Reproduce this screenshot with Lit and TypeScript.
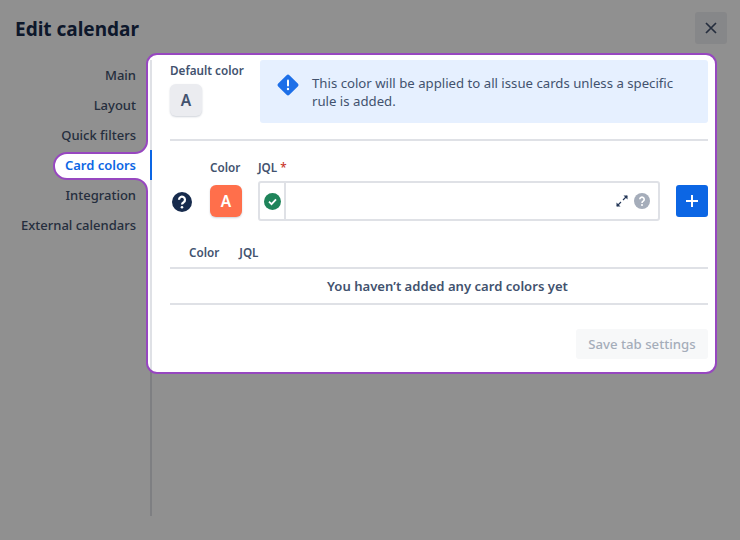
import { LitElement, html, css, svg } from "lit";
import { customElement } from "lit/decorators.js";

const NAV = ["Main", "Layout", "Quick filters", "Card colors", "Integration", "External calendars"];

@customElement("app-root")
export class AppRoot extends LitElement {
  static styles = css`
    :host {
      display: block;
      position: relative;
      width: 740px;
      height: 540px;
      overflow: hidden;
      background: #fff;
      color: #42526e;
      font-family: "Noto Sans", "Open Sans", sans-serif;
      font-size: 13px;
    }
    .head {
      height: 60px;
      display: flex;
      align-items: flex-start;
      justify-content: space-between;
      padding: 12px 13px 0 15px;
      box-sizing: border-box;
    }
    h1 {
      margin: 0;
      font-size: 19px;
      line-height: 34px;
      font-weight: 700;
      color: #172b4d;
    }
    .close {
      width: 32px;
      height: 32px;
      border-radius: 3px;
      background: #eeeff2;
      display: flex;
      align-items: center;
      justify-content: center;
    }
    .body {
      display: flex;
      height: 456px;
    }
    nav {
      width: 150px;
      flex: none;
      border-right: 2px solid #dfe1e6;
    }
    .item {
      height: 30px;
      line-height: 30px;
      padding-right: 14px;
      margin-right: -2px;
      border-right: 2px solid transparent;
      text-align: right;
      font-weight: 500;
      white-space: nowrap;
    }
    .item.on {
      color: #0c66e4;
      font-weight: 600;
      border-right-color: #0c66e4;
    }
    main {
      flex: 1;
      padding: 0 32px 0 18px;
    }
    .top {
      display: flex;
      height: 79px;
      border-bottom: 2px solid #dfe1e6;
    }
    .def {
      width: 90px;
      flex: none;
    }
    .lab {
      font-size: 11.7px;
      font-weight: 600;
      line-height: 16px;
      color: #42526e;
      white-space: nowrap;
    }
    .def .lab {
      margin: 3px 0 5px;
      position: relative;
      top: -1px;
    }
    .swatch {
      width: 32px;
      height: 32px;
      border-radius: 6px;
      display: flex;
      align-items: center;
      justify-content: center;
      font-weight: 600;
      font-size: 15.5px;
      background: #ebecf0;
      color: #42526e;
      box-shadow: 0 1px 2px rgba(9, 30, 66, 0.2);
    }
    .swatch.orange {
      background: #ff6f4b;
      color: #fff;
    }
    .info {
      flex: 1;
      height: 63px;
      box-sizing: border-box;
      background: #e6f0ff;
      border-radius: 3px;
      padding: 14px 30px 0 17px;
      display: flex;
      gap: 13px;
      font-size: 13.2px;
      line-height: 18px;
      color: #42526e;
    }
    .info svg {
      flex: none;
    }
    .form {
      display: grid;
      grid-template-columns: 40px 48px 402px 1fr;
      grid-template-rows: 40px 40px;
      align-items: center;
    }
    .form .lab {
      align-self: end;
      padding-bottom: 6px;
    }
    .req {
      color: #c9372c;
      font-weight: 500;
    }
    .q {
      justify-self: start;
      margin-left: 2px;
      margin-top: 2px;
      display: block;
    }
    .plus {
      justify-self: end;
      width: 32px;
      height: 32px;
      border-radius: 3px;
      background: #0c66e4;
      display: flex;
      align-items: center;
      justify-content: center;
    }
    .input {
      height: 40px;
      box-sizing: border-box;
      border: 2px solid #dfe1e6;
      border-radius: 3px;
      display: flex;
      align-items: center;
      background: #fff;
    }
    .check {
      width: 24px;
      height: 100%;
      flex: none;
      border-right: 2px solid #dfe1e6;
      display: flex;
      align-items: center;
      justify-content: center;
    }
    .fill {
      flex: 1;
    }
    .tools {
      display: flex;
      align-items: center;
      gap: 5px;
      padding-right: 8px;
    }
    .thead {
      margin-top: 16px;
      height: 30px;
      display: flex;
      align-items: center;
      gap: 20px;
      padding: 0 0 0 19px;
      border-bottom: 2px solid #dfe1e6;
      font-size: 11.7px;
      font-weight: 600;
    }
    .empty {
      height: 34px;
      line-height: 34px;
      padding-left: 17px;
      text-align: center;
      font-size: 13.1px;
      font-weight: 600;
      border-bottom: 2px solid #dfe1e6;
    }
    .actions {
      margin-top: 24px;
      display: flex;
      justify-content: flex-end;
    }
    .save {
      width: 132px;
      height: 30px;
      line-height: 30px;
      text-align: center;
      font-size: 13.2px;
      font-weight: 500;
      border-radius: 3px;
      background: #f7f8f9;
      color: #a5adba;
    }
    .spot {
      position: absolute;
      inset: 0;
      pointer-events: none;
    }
  `;

  render() {
    const hole =
      "M157 54H706a10 10 0 0 1 10 10V363a10 10 0 0 1-10 10H157a10 10 0 0 1-10-10V191a12 12 0 0 0-12-12H67a13 13 0 0 1 0-26H135a12 12 0 0 0 12-12V64a10 10 0 0 1 10-10Z";
    return html`
      <div class="head">
        <h1>Edit calendar</h1>
        <div class="close">
          <svg width="16" height="16" viewBox="0 0 16 16">
            <path d="M3 3l10 10M13 3L3 13" stroke="#42526e" stroke-width="1.700" fill="none" />
          </svg>
        </div>
      </div>
      <div class="body">
        <nav>${NAV.map((n) => html`<div class="item ${n === "Card colors" ? "on" : ""}">${n}</div>`)}</nav>
        <main>
          <div class="top">
            <div class="def">
              <div class="lab">Default color</div>
              <div class="swatch">A</div>
            </div>
            <div class="info">
              <svg width="22" height="22" viewBox="0 0 22 22">
                <path
                  d="M11 .6a2 2 0 0 1 1.4.6l8.400 8.400a2 2 0 0 1 0 2.800l-8.400 8.400a2 2 0 0 1-2.800 0l-8.400-8.400a2 2 0 0 1 0-2.800l8.400-8.400A2 2 0 0 1 11 .6Z"
                  fill="#1d6fe8"
                />
                <rect x="10" y="5.500" width="2" height="7" rx="1" fill="#fff" />
                <circle cx="11" cy="15" r="1.200" fill="#fff" />
              </svg>
              <div>This color will be applied to all issue cards unless a specific rule is added.</div>
            </div>
          </div>
          <div class="form">
            <div></div>
            <div class="lab">Color</div>
            <div class="lab">JQL <span class="req">*</span></div>
            <div></div>
            <svg class="q" width="20" height="20" viewBox="0 0 20 20">
              <circle cx="10" cy="10" r="10" fill="#172b4d" />
              <path d="M7 7.700a3 3 0 1 1 4.700 2.500c-1.100.7-1.700 1.200-1.700 2.300" stroke="#fff" stroke-width="2.200" fill="none" />
              <circle cx="10" cy="15.300" r="1.300" fill="#fff" />
            </svg>
            <div class="swatch orange">A</div>
            <div class="input">
              <div class="check">
                <svg width="17" height="17" viewBox="0 0 17 17">
                  <circle cx="8.500" cy="8.500" r="8.500" fill="#1f845a" />
                  <path d="M5 8.700l2.500 2.400L12 6.300" stroke="#fff" stroke-width="1.800" fill="none" />
                </svg>
              </div>
              <div class="fill"></div>
              <div class="tools">
                <svg width="14" height="14" viewBox="0 0 14 14">
                  <path d="M8 6l4-4M2 12l4-4" stroke="#253858" stroke-width="1.100" fill="none" />
                  <path d="M8.500 1.500H12.500V5.500ZM1.500 8.500V12.500H5.500Z" fill="#253858" />
                </svg>
                <svg width="16" height="16" viewBox="0 0 16 16">
                  <circle cx="8" cy="8" r="8" fill="#a5adba" />
                  <path d="M5.800 6.300a2.200 2.200 0 1 1 3.400 1.900c-.8.500-1.200.8-1.200 1.700" stroke="#fff" stroke-width="1.600" fill="none" />
                  <circle cx="8" cy="12" r="1" fill="#fff" />
                </svg>
              </div>
            </div>
            <div class="plus">
              <svg width="14" height="14" viewBox="0 0 14 14">
                <path d="M7 1v12M1 7h12" stroke="#fff" stroke-width="2" />
              </svg>
            </div>
          </div>
          <div class="thead"><span>Color</span><span>JQL</span></div>
          <div class="empty">You haven’t added any card colors yet</div>
          <div class="actions"><div class="save">Save tab settings</div></div>
        </main>
      </div>
      <svg class="spot" width="740" height="540" viewBox="0 0 740 540">
        ${svg`<path d="M0 0H740V540H0Z ${hole}" fill="#000" fill-opacity=".435" fill-rule="evenodd" />
        <path d=${hole} fill="none" stroke="#9747c0" stroke-width="2" />`}
      </svg>
    `;
  }
}
